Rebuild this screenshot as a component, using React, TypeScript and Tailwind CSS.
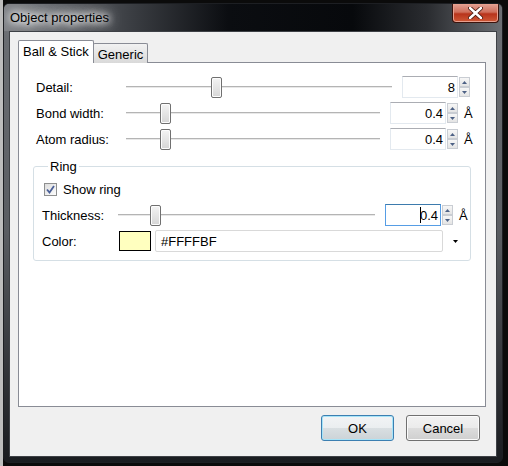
import React from 'react';

// Win7-style Qt dialog: "Object properties"

const SpinArrow: React.FC<{ up?: boolean }> = ({ up }) => (
  <div className="w-[11px] h-[10px] border border-[#c9cdd3] bg-linear-to-b from-[#f7f7f7] to-[#e4e4e4] flex items-center justify-center">
    <svg width="5" height="3" viewBox="0 0 5 3">
      {up ? <path d="M0 3 L2.5 0 L5 3 Z" fill="#4d6185" /> : <path d="M0 0 L2.5 3 L5 0 Z" fill="#4d6185" />}
    </svg>
  </div>
);

const SpinBox: React.FC<{ value: string; focused?: boolean }> = ({ value, focused }) => (
  <div className="flex items-center">
    <div
      className={`w-[56px] h-[22px] border bg-white flex items-center justify-end pr-[2px] ${
        focused ? 'border-[#569de5] border-t-[#3d7bad]' : 'border-[#e3e9ef] border-t-[#abadb3]'
      }`}
    >
      {focused && <span className="w-px h-[16px] bg-black -mr-[1px] relative z-10" />}
      <span>{value}</span>
    </div>
    <div className="flex flex-col ml-px">
      <SpinArrow up />
      <SpinArrow />
    </div>
  </div>
);

const Slider: React.FC<{ thumbLeft: string }> = ({ thumbLeft }) => (
  <div className="relative flex-1 h-[21px] flex items-center">
    <div className="w-full h-[2px] bg-[#b4b4b4] border-b border-[#e8e8e8]" />
    <div
      className={`absolute top-0 ${thumbLeft} h-[21px] w-[11px] rounded-[2px] border border-[#707070] bg-linear-to-b from-[#f4f4f4] to-[#d6d6d6] shadow-[inset_0_0_0_1px_#fcfcfc]`}
    />
  </div>
);

const Angstrom = () => <span className="ml-[6px] w-[9px]">Å</span>;

export default function App() {
  return (
    <div
      className="w-[508px] h-[466px] pt-[3px] pl-[3px] bg-[linear-gradient(90deg,#bdbdbd_0px,#bdbdbd_3px,#0b0b0b_3px)] text-[13px] text-black leading-none"
      style={{ fontFamily: '"Liberation Sans", Arial, sans-serif' }}
    >
      <div className="w-[500px] h-[460px] rounded-[6px] border border-[#1d1f23] bg-linear-to-b from-[#6d7075] via-[#5a5d62] to-[#1a1c20] flex flex-col overflow-hidden">
        {/* title bar */}
        <div className="h-[27px] flex items-start justify-between bg-[linear-gradient(90deg,#7f8287_0%,#3c3f44_25%,#0b0d11_45%,#07090c_70%,#2a2c30_85%,#6b6e73_100%)]">
          <div className="pl-[6px] pt-[7px] [text-shadow:0_0_6px_#fff,0_0_10px_#fff,0_0_14px_#fff,0_0_18px_#fff]">
            Object properties
          </div>
          <div className="mr-[3px] w-[47px] h-[19px] rounded-b-[4px] border border-t-0 border-[#3b130c] bg-[linear-gradient(#e3a194,#cf6f5b_45%,#b8341b_55%,#cf5a38)] shadow-[inset_0_0_0_1px_#e7a08f] flex items-center justify-center">
            <svg width="15" height="12" viewBox="0 0 15 12">
              <path d="M2 1 L13 11 M13 1 L2 11" stroke="#4a1a10" strokeWidth="4.2" strokeLinecap="round" />
              <path d="M2 1 L13 11 M13 1 L2 11" stroke="#ffffff" strokeWidth="2.4" strokeLinecap="round" />
            </svg>
          </div>
        </div>

        {/* client area */}
        <div className="flex-1 mx-[5px] mb-[5px] border border-[#3e4146] bg-[#f0f0f0] flex flex-col pt-[8px] pl-[8px] pr-[10px]">
          {/* tabs */}
          <div className="flex items-end h-[23px] relative z-10">
            <div className="h-[23px] px-[4px] pt-[4px] bg-white border border-b-0 border-[#898c95] rounded-t-[2px]">
              Ball &amp; Stick
            </div>
            <div className="h-[20px] px-[4px] pt-[4px] -ml-px border border-b-0 border-[#898c95] rounded-t-[2px] bg-linear-to-b from-[#f2f2f2] to-[#d9d9d9]">
              Generic
            </div>
          </div>

          {/* tab pane */}
          <div className="flex-1 -mt-px bg-white border border-[#898c95] flex flex-col pt-[11px]">
            <div className="h-[26px] flex items-center pl-[17px] pr-[15px]">
              <span className="w-[90px]">Detail:</span>
              <Slider thumbLeft="left-[85px]" />
              <div className="ml-[10px]">
                <SpinBox value="8" />
              </div>
            </div>
            <div className="h-[26px] flex items-center pl-[17px] pr-[12px]">
              <span className="w-[90px]">Bond width:</span>
              <Slider thumbLeft="left-[34px]" />
              <div className="ml-[10px]">
                <SpinBox value="0.4" />
              </div>
              <Angstrom />
            </div>
            <div className="h-[26px] flex items-center pl-[17px] pr-[12px]">
              <span className="w-[90px]">Atom radius:</span>
              <Slider thumbLeft="left-[34px]" />
              <div className="ml-[10px]">
                <SpinBox value="0.4" />
              </div>
              <Angstrom />
            </div>

            {/* Ring group */}
            <fieldset className="mx-[14px] mt-[8px] border border-[#d5dfe5] rounded-[3px] pl-[8px] pr-[2px] pt-[3px] pb-[6px]">
              <legend className="ml-[6px] px-[2px]">Ring</legend>
              <div className="h-[26px] flex items-center">
                <div className="ml-[2px] w-[13px] h-[13px] border border-[#8e8f8f] bg-linear-to-br from-[#dcdcdc] to-[#fdfdfd] flex items-center justify-center">
                  <svg width="9" height="9" viewBox="0 0 9 9">
                    <path d="M1 4.5 L3.5 7.5 L8 1" fill="none" stroke="#4a5f97" strokeWidth="1.8" />
                  </svg>
                </div>
                <span className="ml-[6px]">Show ring</span>
              </div>
              <div className="h-[26px] flex items-center">
                <span className="w-[76px]">Thickness:</span>
                <Slider thumbLeft="left-[32px]" />
                <div className="ml-[10px]">
                  <SpinBox value="0.4" focused />
                </div>
                <Angstrom />
              </div>
              <div className="h-[26px] flex items-center">
                <span className="w-[77px]">Color:</span>
                <div className="w-[32px] h-[20px] border border-black bg-[#FFFFBF]" />
                <div className="ml-[4px] flex-1 h-[22px] border border-[#d9d9d9] rounded-[2px] bg-white flex items-center pl-[5px]">
                  #FFFFBF
                </div>
                <div className="w-[25px] flex justify-center">
                  <svg width="5" height="3" viewBox="0 0 5 3">
                    <path d="M0 0 L2.5 3 L5 0 Z" fill="#000" />
                  </svg>
                </div>
              </div>
            </fieldset>
          </div>

          {/* buttons */}
          <div className="flex justify-end gap-[12px] mt-[8px] mb-[15px] pr-[6px]">
            <button className="w-[73px] h-[26px] rounded-[3px] border border-[#3c7fb1] shadow-[inset_0_0_0_1px_#a7e4f8] bg-[linear-gradient(#f2f4f5,#eaeef0_50%,#d9dfe2_50%,#ccd3d7)]">
              OK
            </button>
            <button className="w-[74px] h-[26px] rounded-[3px] border border-[#707070] shadow-[inset_0_0_0_1px_#fbfbfb] bg-[linear-gradient(#f2f2f2,#ebebeb_50%,#dddddd_50%,#cfcfcf)]">
              Cancel
            </button>
          </div>
        </div>
      </div>
    </div>
  );
}
